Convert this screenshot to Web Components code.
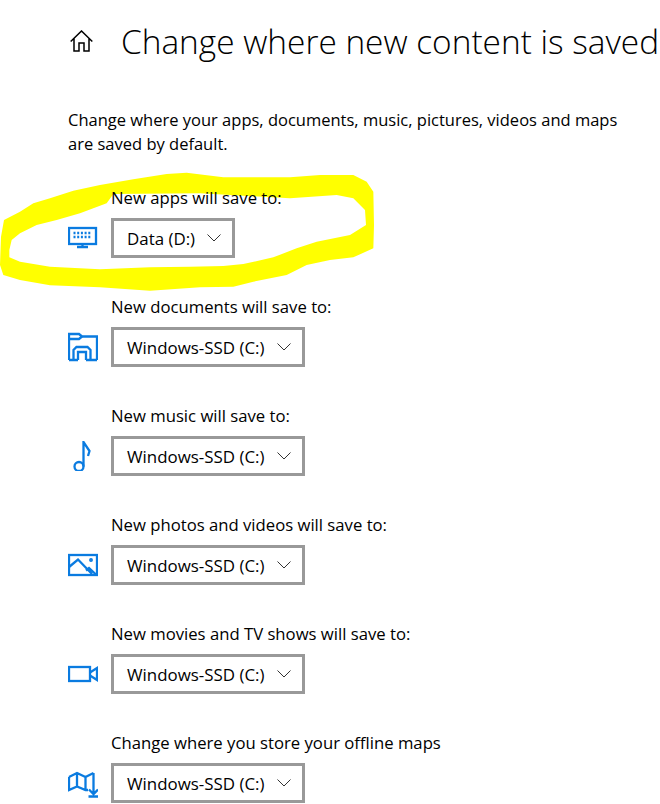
<!DOCTYPE html>
<html>
<head>
<meta charset="utf-8">
<title>Change where new content is saved</title>
<style>
  html, body { margin: 0; height: 804px; overflow: hidden; background: #fff; }
  body { font-family: "Open Sans", "Liberation Sans", sans-serif; color: #000; }
</style>
</head>
<body>
<template id="icons">
  <svg data-icon="monitor" viewBox="0 0 30 30"><rect x="1" y="5" width="27" height="16"/><path d="M14.500 21v3M9 24h11"/><path d="M5.500 10h18M5.500 14h18" stroke-dasharray="2 1.700"/></svg>
  <svg data-icon="folder" viewBox="0 0 30 30"><path d="M1 28V2h10l3 2.500h15V28"/><path d="M1 7h10l3-2.500"/><path d="M1 28h9M18 28h11"/><path d="M5.500 28V18l3-3h11l3 3v10M10 28v-8h8v8"/></svg>
  <svg data-icon="note" viewBox="0 0 30 30"><circle cx="11" cy="25.500" r="4.500"/><path d="M15.500 25.500V1l6 9-1.500 5"/></svg>
  <svg data-icon="image" viewBox="0 0 30 30"><rect x="1" y="5" width="28" height="20"/><path d="M1 17l9-7.500L24 24M18 20.500l3-2.500 7.500 7"/><circle cx="23" cy="10" r=".8"/></svg>
  <svg data-icon="video" viewBox="0 0 30 30"><rect x="1" y="8" width="21" height="14"/><path d="M22 13.500L29 9v12l-7-4.500"/></svg>
  <svg data-icon="map" viewBox="0 0 30 30"><path d="M1 9l8-4 8.500 4 8-4M1 9v13l8-3.500 8.500 3.500h2.500M9 5v13.500M17.500 9v13"/><path d="M25.500 5v21M21 21.500l4.500 4.500 4.500-4.500M20.500 28.500H30"/></svg>
</template>

<template id="settings-page-tpl">
  <style>
    :host { display: block; position: relative; height: 804px; overflow: hidden; padding: 0 0 0 68px; box-sizing: border-box; }
    .scribble { position: absolute; left: 0; top: 170px; width: 390px; height: 130px; }
    .content { position: relative; display: flex; flex-direction: column; }
    .rows { display: flex; flex-direction: column; gap: 37px; }
  </style>
  <!-- hand drawn highlighter ring round the first row -->
  <svg class="scribble" viewBox="0 0 1170 390">
    <path fill="#ffff00" fill-rule="evenodd" d="M12 150L60 125L100 100L150 85L220 62L300 45L400 28L500 12L560 8L670 22L870 22L960 15L1060 15L1100 35L1120 65L1122 165L1120 235L1060 262L990 270L920 285L860 315L760 335L700 350L600 352L450 362L300 352L150 346L60 330L10 315L0 285L3 200Z
      M28 240L35 210L60 190L110 165L170 150L240 130L320 100L340 72L600 70L870 85L1010 75L1060 85L1095 120L1098 165L1050 195L950 215L890 235L820 262L730 282L670 288L570 290L450 292L300 298L150 290L60 275L28 262Z"/>
  </svg>
  <div class="content">
    <page-header>Change where new content is saved</page-header>
    <page-intro>Change where your apps, documents, music, pictures, videos and maps are saved by default.</page-intro>
    <div class="rows">
      <save-row label="New apps will save to:" icon="monitor" drive="Data (D:)"></save-row>
      <save-row label="New documents will save to:" icon="folder" drive="Windows-SSD (C:)"></save-row>
      <save-row label="New music will save to:" icon="note" drive="Windows-SSD (C:)"></save-row>
      <save-row label="New photos and videos will save to:" icon="image" drive="Windows-SSD (C:)"></save-row>
      <save-row label="New movies and TV shows will save to:" icon="video" drive="Windows-SSD (C:)"></save-row>
      <save-row label="Change where you store your offline maps" icon="map" drive="Windows-SSD (C:)"></save-row>
    </div>
  </div>
</template>

<script>
class SettingsPage extends HTMLElement {
  constructor() {
    super();
    this.attachShadow({ mode: "open" });
    this.shadowRoot.appendChild(document.getElementById("settings-page-tpl").content.cloneNode(true));
  }
}

class PageHeader extends HTMLElement {
  constructor() {
    super();
    this.attachShadow({ mode: "open" });
    this.shadowRoot.innerHTML = `
      <style>
        :host { display: flex; align-items: center; height: 84px; white-space: nowrap; }
        svg { width: 23px; height: 22px; margin: 0 28px 2px 2px; flex: none; fill: none; stroke: #000; stroke-width: 1.5; }
        h1 { margin: 0 0 2px; font-weight: 300; font-size: 33.400px; line-height: 44px; }
      </style>
      <svg viewBox="0 0 23 22"><path d="M.7 11.500L11.500 1l10.800 10.500M4 8.500V21h5v-8h5v8h5V8.500"/></svg>
      <h1><slot></slot></h1>`;
  }
}

class PageIntro extends HTMLElement {
  constructor() {
    super();
    this.attachShadow({ mode: "open" });
    this.shadowRoot.innerHTML = `
      <style>
        :host { display: block; width: 570px; height: 102px; padding-top: 24px; font-size: 16.500px; line-height: 24px; box-sizing: border-box; }
      </style>
      <slot></slot>`;
  }
}

class SaveRow extends HTMLElement {
  constructor() {
    super();
    this.attachShadow({ mode: "open" });
    const icon = document.querySelector("#icons").content.querySelector(`[data-icon="${this.getAttribute("icon")}"]`).cloneNode(true);
    this.shadowRoot.innerHTML = `
      <style>
        :host { display: block; height: 72px; }
        .label { height: 24px; margin: 0 0 8px 43px; font-size: 16.700px; line-height: 24px; white-space: nowrap; }
        .line { display: flex; align-items: center; gap: 13px; }
        svg { width: 30px; height: 30px; flex: none; fill: none; stroke: #0a7be0; stroke-width: 2.3; }
      </style>
      <div class="label">${this.getAttribute("label")}</div>
      <div class="line"><drive-select>${this.getAttribute("drive")}</drive-select></div>`;
    this.shadowRoot.querySelector(".line").prepend(icon);
  }
}

class DriveSelect extends HTMLElement {
  constructor() {
    super();
    this.attachShadow({ mode: "open" });
    this.shadowRoot.innerHTML = `
      <style>
        :host { display: inline-flex; align-items: center; gap: 12px; height: 40px; box-sizing: border-box; border: 3px solid #999; padding: 0 11px 0 13px; font-size: 16.900px; white-space: nowrap; background: #fff; }
        svg { width: 14px; height: 8px; fill: none; stroke: #333; stroke-width: 1; }
      </style>
      <span><slot></slot></span>
      <svg viewBox="0 0 14 8"><path d="M.5.500l6.500 6.500 6.500-6.500"/></svg>`;
  }
}

customElements.define("page-header", PageHeader);
customElements.define("page-intro", PageIntro);
customElements.define("drive-select", DriveSelect);
customElements.define("save-row", SaveRow);
customElements.define("settings-page", SettingsPage);
</script>
<settings-page></settings-page>
</body>
</html>
